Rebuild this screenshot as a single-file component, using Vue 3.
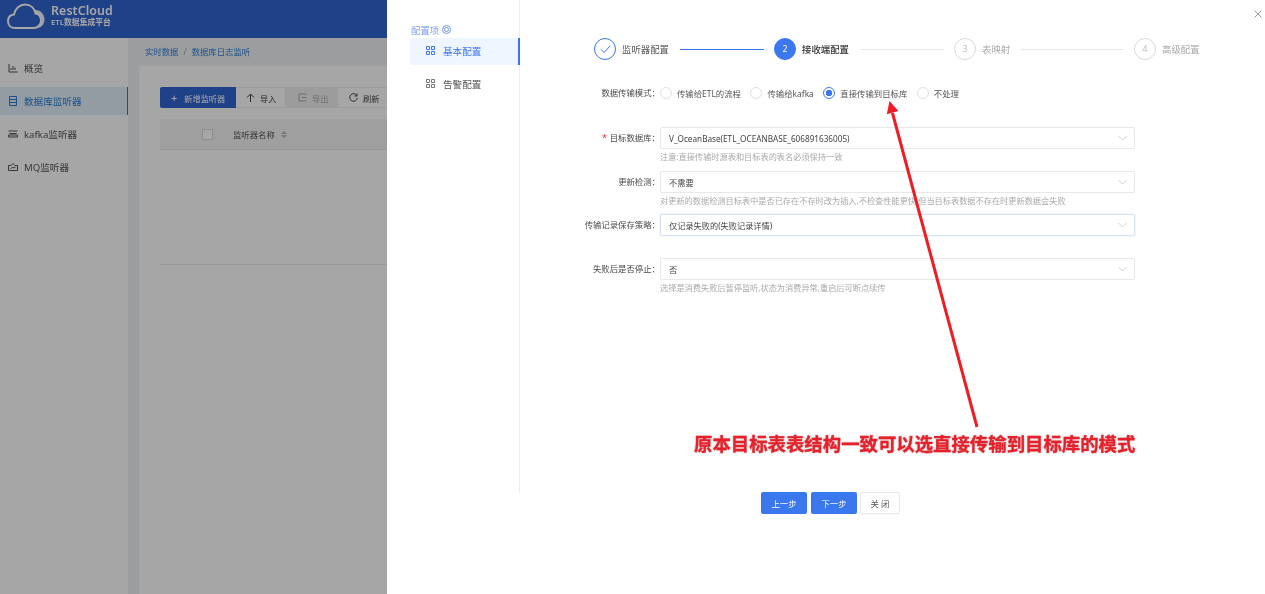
<script setup>
const navItems = [
  { name: '概览', icon: 'chart' },
  { name: '数据库监听器', icon: 'list', active: true },
  { name: 'kafka监听器', icon: 'tray' },
  { name: 'MQ监听器', icon: 'cloud' }
]

const steps = [
  { title: '监听器配置', state: 'done' },
  { title: '接收端配置', state: 'current', num: 2 },
  { title: '表映射', state: 'todo', num: 3 },
  { title: '高级配置', state: 'todo', num: 4 }
]

const radios = [
  { text: '传输给ETL的流程' },
  { text: '传输给kafka' },
  { text: '直接传输到目标库', checked: true },
  { text: '不处理' }
]

const fields = [
  { label: '目标数据库', required: true, value: 'V_OceanBase(ETL_OCEANBASE_606891636005)', hint: '注意:直接传输时源表和目标表的表名必须保持一致', cls: 'row-target' },
  { label: '更新检测', value: '不需要', hint: '对更新的数据检测目标表中是否已存在不存时改为插入,不检查性能更快,但当目标表数据不存在时更新数据会失败', cls: 'row-update' },
  { label: '传输记录保存策略', value: '仅记录失败的(失败记录详情)', focus: true, cls: 'row-log' },
  { label: '失败后是否停止', value: '否', hint: '选择是消费失败后暂停监听,状态为消费异常,重启后可断点续传', cls: 'row-stop' }
]
</script>

<template>
  <div class="page">
    <div class="app">
      <header class="topbar">
        <svg class="logo" width="38" height="26" viewBox="0 0 38 26">
          <path d="M26 7c6-1 11 3 11.500 9 .5 5.500-4 9.500-9.500 9.500H22z" fill="#f4f6fa" />
          <path d="M8 25C3.500 25 1 22 1 18 1 14.500 3.500 12 7 11.500 8 5.500 13 1.500 18 1.500c5.500 0 9.500 3.500 10.500 9 3.500 .5 5.500 3.500 5.500 7 0 4-3 7.500-7.500 7.500z" fill="#3164d1" stroke="#fff" stroke-width="2" />
        </svg>
        <div class="brand">
          <div class="brand-name">RestCloud</div>
          <div class="brand-sub">ETL数据集成平台</div>
        </div>
      </header>
      <div class="app-body">
        <aside class="sidenav">
          <div v-for="item in navItems" :key="item.name" class="nav-item" :class="{ active: item.active }">
            <svg width="10" height="10" viewBox="0 0 10 10" fill="none" stroke="currentColor" stroke-width="1">
              <template v-if="item.icon === 'chart'">
                <path d="M1 1v8h8.500M3 7V5M5 7V3M7 7V4.500" />
              </template>
              <template v-else-if="item.icon === 'list'">
                <path d="M1.500 .5h7v9h-7zM1.500 3.500h7M1.500 6.500h7" />
              </template>
              <template v-else-if="item.icon === 'tray'">
                <path d="M.5 2h9M1.500 4.500h7M.5 8h9v-2h-9z" />
              </template>
              <template v-else>
                <path d="M.5 8.500v-5h2.500l2-2 2 2h2.500v5zM2.500 7l2-2 1.500 1 1.500-1" />
              </template>
            </svg>
            <span>{{ item.name }}</span>
          </div>
        </aside>
        <main class="content">
          <div class="crumbs"><span>实时数据</span><i>/</i><span>数据库日志监听</span></div>
          <section class="card">
            <div class="toolbar">
              <div class="tool primary"><b>+</b>新增监听器</div>
              <div class="tool t-import">
                <svg width="9" height="9" viewBox="0 0 9 9" fill="none" stroke="currentColor"><path d="M4.500 9V1M1 4.500L4.500 1 8 4.500" /></svg>
                导入
              </div>
              <div class="tool disabled">
                <svg width="9" height="9" viewBox="0 0 9 9" fill="none" stroke="currentColor"><path d="M8 2V1H1v7h7V7M4 4.500h4.500" /></svg>
                导出
              </div>
              <div class="tool t-refresh">
                <svg width="9" height="9" viewBox="0 0 9 9" fill="none" stroke="currentColor"><path d="M7.800 2.500A3.800 3.800 0 1 0 8.300 5M8 .5v2.500H5.500" /></svg>
                刷新
              </div>
            </div>
            <div class="thead">
              <span class="check"></span>
              <span class="th">监听器名称</span>
              <span class="sorter"><i></i><i></i></span>
            </div>
            <div class="tbody"></div>
          </section>
        </main>
      </div>
    </div>

    <div class="mask"></div>

    <div class="drawer">
      <aside class="config">
        <div class="config-title">
          配置项
          <svg width="9" height="9" viewBox="0 0 9 9" fill="none" stroke="#6f97ee"><circle cx="4.500" cy="4.500" r="4" /><circle cx="4.500" cy="4.500" r="2" /></svg>
        </div>
        <div class="config-item on">
          <svg width="9" height="9" viewBox="0 0 9 9" fill="none" stroke="currentColor"><path d="M.5.5h3v3h-3zM5.500.5h3v3h-3zM.5 5.500h3v3h-3zM5.500 5.500h3v3h-3z" /></svg>
          基本配置
        </div>
        <div class="config-item">
          <svg width="9" height="9" viewBox="0 0 9 9" fill="none" stroke="currentColor"><path d="M.5.5h3v3h-3zM5.500.5h3v3h-3zM.5 5.500h3v3h-3zM5.500 5.500h3v3h-3z" /></svg>
          告警配置
        </div>
      </aside>

      <div class="main">
        <div class="steps">
          <div v-for="step in steps" :key="step.title" class="step" :class="step.state">
            <span class="dot">
              <svg v-if="step.state === 'done'" width="11" height="9" viewBox="0 0 11 9" fill="none" stroke="#3b78f0"><path d="M1 4.500l3 3L10 1" /></svg>
              <template v-else>{{ step.num }}</template>
            </span>
            <span class="step-title">{{ step.title }}</span>
            <span class="step-line"></span>
          </div>
        </div>

        <div class="form">
          <div class="row row-mode">
            <label class="label">数据传输模式：</label>
            <div class="radios">
              <span v-for="r in radios" :key="r.text" class="radio" :class="{ checked: r.checked }">
                <i></i>{{ r.text }}
              </span>
            </div>
          </div>
          <div v-for="f in fields" :key="f.label" class="row" :class="f.cls">
            <label class="label"><em v-if="f.required">*</em>{{ f.label }}：</label>
            <div class="control">
              <div class="select" :class="{ focus: f.focus }">
                <span>{{ f.value }}</span>
                <svg width="9" height="6" viewBox="0 0 9 6" fill="none" stroke="#cfd1d6"><path d="M.5 1l4 4 4-4" /></svg>
              </div>
              <div v-if="f.hint" class="hint">{{ f.hint }}</div>
            </div>
          </div>
        </div>

        <div class="actions">
          <button class="btn blue">上一步</button>
          <button class="btn blue">下一步</button>
          <button class="btn plain">关 闭</button>
        </div>
      </div>

      <svg class="close" width="8" height="8" viewBox="0 0 8 8" fill="none" stroke="#9a9a9a"><path d="M.5.5l7 7M7.500.5l-7 7" /></svg>
    </div>

    <!-- annotation drawn on top of the screenshot -->
    <svg class="arrow" width="110" height="340" viewBox="0 0 110 340">
      <path d="M97 335L12.500 21" stroke="#ee1c25" stroke-width="3" fill="none" />
      <path d="M9.500 9L6.800 22.200 18.400 19z" fill="#ee1c25" />
    </svg>
    <div class="note">原本目标表表结构一致可以选直接传输到目标库的模式</div>
  </div>
</template>

<style scoped>
.page {
  position: relative;
  width: 1265px;
  height: 594px;
  overflow: hidden;
  background: #fff;
  font-family: "Noto Sans", "Noto Sans CJK SC", sans-serif;
  font-size: 9.4px;
  color: #555;
  filter: blur(0.3px);
}
.app {
  display: flex;
  flex-direction: column;
  height: 100%;
  filter: blur(0.3px);
}
.topbar {
  height: 38px;
  flex: none;
  display: flex;
  align-items: center;
  gap: 6px;
  padding-left: 7px;
  background: #3164d1;
}
.logo {
  flex: none;
  margin-bottom: 6px;
}
.brand {
  color: #fff;
  margin-bottom: 8px;
}
.brand-name {
  font-size: 12.4px;
  font-weight: 600;
  line-height: 14px;
  letter-spacing: .1px;
}
.brand-sub {
  font-size: 7.8px;
  font-weight: 600;
  line-height: 9px;
}
.app-body {
  flex: 1;
  display: flex;
}
.sidenav {
  width: 128px;
  flex: none;
  background: #fff;
  padding-top: 16px;
  display: flex;
  flex-direction: column;
  gap: 5px;
  box-sizing: border-box;
}
.nav-item {
  height: 28px;
  display: flex;
  align-items: center;
  gap: 6px;
  padding-left: 8px;
  font-size: 9.6px;
  color: #555;
}
.nav-item.active {
  background: #e3f0fa;
  color: #2b7fd6;
  border-right: 1px solid #2b7fd6;
}
.content {
  flex: 1;
  padding: 0 0 0 11px;
  background: #f0f2f5;
}
.crumbs {
  height: 28px;
  padding-bottom: 2px;
  box-sizing: border-box;
  display: flex;
  align-items: center;
  gap: 5px;
  padding-left: 6px;
  font-size: 8.4px;
  color: #2b7fd6;
}
.crumbs i {
  color: #999;
  font-style: normal;
}
.card {
  background: #fff;
  padding: 21px;
  height: 100%;
}
.toolbar {
  display: flex;
  height: 21px;
}
.tool {
  flex: none;
  width: 52px;
  box-sizing: border-box;
  display: flex;
  align-items: center;
  gap: 5px;
  padding-left: 11px;
  border: 1px solid #f0f0f0;
  border-left: 0;
  font-size: 8.2px;
  color: #444;
  white-space: nowrap;
}
.tool b {
  font-weight: 400;
  font-size: 11px;
  margin-right: 2px;
}
.tool.primary {
  background: #3164d1;
  color: #fff;
  border: 0;
  border-radius: 2px 0 0 2px;
  width: 76px;
}
.tool.t-import {
  width: 50px;
  padding-left: 10px;
}
.tool.disabled {
  background: #f0f0f0;
  color: #aaa;
  padding-left: 12px;
}
.tool.t-refresh {
  padding-left: 11px;
  width: 60px;
}
.thead {
  margin-top: 11px;
  height: 31px;
  display: flex;
  align-items: center;
  padding-left: 42px;
  background: #f5f5f5;
  border-bottom: 1px solid #e8e8e8;
  box-sizing: border-box;
}
.check {
  width: 11px;
  height: 11px;
  background: #fff;
  border: 1px solid #d9d9d9;
  box-sizing: border-box;
}
.th {
  margin-left: 20px;
  font-size: 8.4px;
  color: #555;
}
.sorter {
  margin-left: 6px;
  display: flex;
  flex-direction: column;
  gap: 1px;
}
.sorter i {
  width: 0;
  height: 0;
  border: 3px solid transparent;
  border-top-width: 0;
  border-bottom: 3px solid #bbb;
}
.sorter i + i {
  border-bottom-width: 0;
  border-top: 3px solid #bbb;
}
.tbody {
  height: 114px;
  border-bottom: 1px solid #e8e8e8;
}
.mask {
  position: absolute;
  inset: 0;
  background: rgba(0, 0, 0, .35);
}
.drawer {
  position: absolute;
  top: 0;
  right: 0;
  bottom: 0;
  width: 878px;
  box-sizing: border-box;
  background: #fff;
  display: flex;
}
.config {
  margin-left: 23px;
  width: 110px;
  height: 493px;
  flex: none;
  padding-top: 21px;
  border-right: 1px solid #e8edf3;
  box-sizing: border-box;
}
.config-title {
  height: 17px;
  display: flex;
  align-items: center;
  gap: 3px;
  padding-left: 1px;
  color: #7c9ff0;
  font-size: 9.4px;
}
.config-item {
  height: 27px;
  margin-bottom: 6px;
  padding: 0 0 2px 16px;
  box-sizing: border-box;
  display: flex;
  align-items: center;
  gap: 8px;
  font-size: 9.6px;
  color: #555;
}
.config-item svg {
  color: #777;
}
.config-item.on {
  background: #f0f6ff;
  color: #3b78f0;
  border-right: 2px solid #3b78f0;
  margin-right: -1px;
}
.config-item.on svg {
  color: #3b78f0;
}
.main {
  flex: 1;
  display: flex;
  flex-direction: column;
  padding-left: 74px;
}
.steps {
  display: flex;
  margin-top: 38px;
  width: 606px;
}
.step {
  flex: none;
  width: 180px;
  display: flex;
  align-items: center;
  height: 22px;
}
.step:last-child {
  width: 66px;
}
.dot {
  flex: none;
  width: 22px;
  height: 22px;
  box-sizing: border-box;
  border-radius: 50%;
  border: 1px solid #d9d9d9;
  color: #bbb;
  display: flex;
  align-items: center;
  justify-content: center;
  font-size: 8.6px;
}
.step-title {
  margin-left: 6px;
  white-space: nowrap;
  color: #aaa;
}
.step-line {
  flex: 1;
  height: 1px;
  margin: 0 10px 0 11px;
  background: #e8e8e8;
}
.step:last-child .step-line {
  display: none;
}
.done .dot {
  border-color: #3b78f0;
}
.done .step-title {
  color: #555;
}
.done .step-line {
  background: #3b78f0;
}
.current .dot {
  background: #3b78f0;
  border-color: #3b78f0;
  color: #fff;
}
.current .step-title {
  color: #333;
  font-weight: 500;
}
.form {
  margin-top: 22px;
  width: 672px;
  margin-left: -106px;
  display: flex;
  flex-direction: column;
}
.row {
  display: flex;
}
.label {
  width: 172px;
  flex: none;
  height: 22px;
  line-height: 22px;
  text-align: right;
  font-size: 8.4px;
  color: #4a4a4a;
  white-space: nowrap;
}
.label em {
  color: #ee1c25;
  font-style: normal;
  margin-right: 3px;
}
.row-mode {
  height: 22px;
  margin-bottom: 23px;
}
.radios {
  display: flex;
  gap: 9.5px;
  align-items: center;
  font-size: 8.4px;
}
.radio {
  display: flex;
  align-items: center;
  gap: 5px;
  white-space: nowrap;
  color: #555;
}
.radio i {
  width: 12px;
  height: 12px;
  box-sizing: border-box;
  border: 1px solid #e0e0e0;
  border-radius: 50%;
  background: #fff;
}
.radio.checked i {
  border-color: #3b78f0;
  background: radial-gradient(circle, #3b78f0 0 3px, #fff 3.5px);
}
.control {
  width: 475px;
  flex: none;
}
.select {
  height: 22px;
  box-sizing: border-box;
  display: flex;
  align-items: center;
  justify-content: space-between;
  padding: 0 7px 0 8px;
  border: 1px solid #e6e8ec;
  border-radius: 2px;
  font-size: 8.2px;
  color: #444;
}
.select.focus {
  border-color: #dbe4f4;
  box-shadow: 0 0 0 1px #f3f6fb;
}
.hint {
  height: 16px;
  line-height: 16px;
  font-size: 8.2px;
  color: #aaa;
  white-space: nowrap;
}
.row-target {
  margin-bottom: 6px;
}
.row-update {
  margin-bottom: 5px;
}
.row-log {
  margin-bottom: 22px;
}
.actions {
  position: absolute;
  top: 492px;
  left: 374px;
  display: flex;
  gap: 4px;
}
.btn {
  height: 22px;
  width: 46px;
  padding: 0;
  border: 0;
  border-radius: 2px;
  font-family: inherit;
  font-size: 8.4px;
}
.btn.blue {
  background: #3b78f0;
  color: #fff;
}
.btn.plain {
  width: 40px;
  background: #fff;
  border: 1px solid #e6e6e6;
  color: #555;
  margin-left: -1px;
}
.close {
  position: absolute;
  top: 10px;
  right: 3px;
}
.arrow {
  position: absolute;
  left: 880px;
  top: 92px;
}
.note {
  position: absolute;
  left: 694px;
  top: 429px;
  font-size: 18.4px;
  line-height: 30px;
  font-weight: 700;
  color: #e8202a;
  white-space: nowrap;
  -webkit-text-stroke: .3px #e8202a;
  text-shadow: 0 0 2px #ccc, 0 0 3px #ddd;
}
</style>
